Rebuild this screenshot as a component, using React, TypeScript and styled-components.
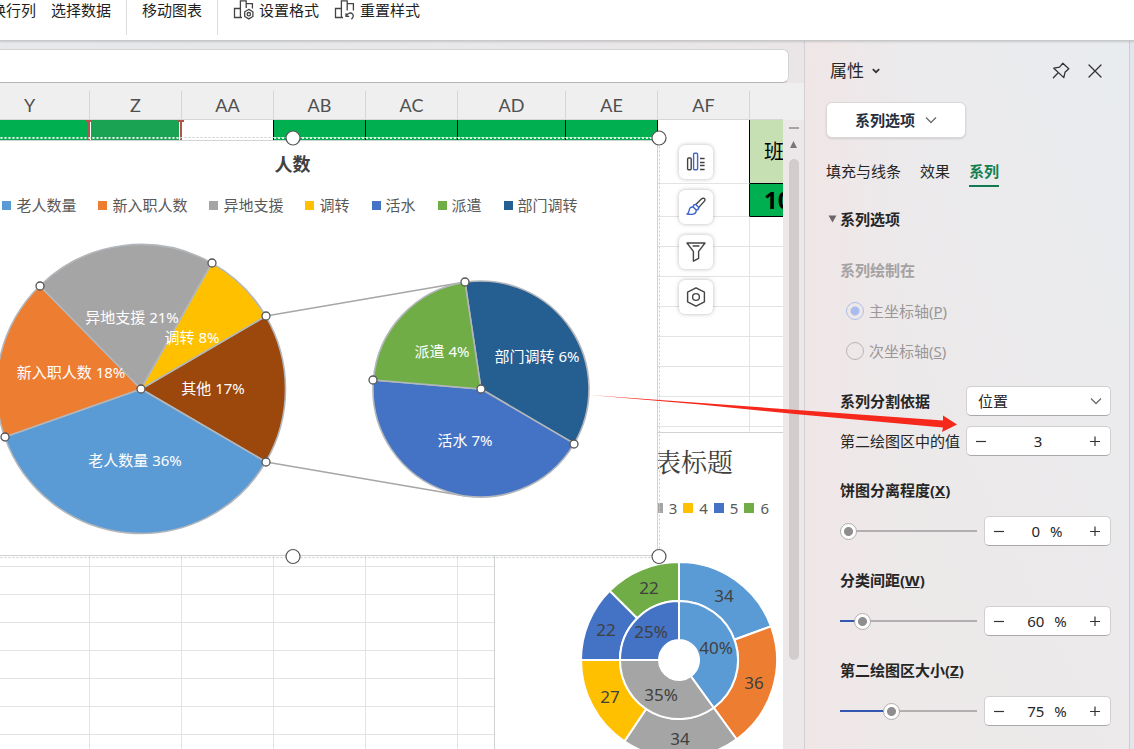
import React, { useId, useState } from "react";
import styled, { createGlobalStyle, css } from "styled-components";

const sans = `"Noto Sans", "Noto Sans CJK SC", sans-serif`;

const GlobalStyle = createGlobalStyle`
  *, *::before, *::after { box-sizing: border-box; }
  body { margin: 0; font-family: ${sans}; font-size: 15px; line-height: 24px; color: #262626; }
  button, input, select { font: inherit; color: inherit; margin: 0; padding: 0; }
  button { border: 0; background: none; }
  svg { display: block; }
`;

/* ---------- shell ---------- */

const Shell = styled.div`
  position: relative;
  display: flex;
  flex-direction: column;
  height: 100vh;
  overflow: hidden;
  background: #e9e9eb;
`;

const Ribbon = styled.header`
  display: flex;
  align-items: flex-start;
  flex: none;
  height: 41px;
  background: #fff;
  border-bottom: 1px solid #c6c8ca;
  box-shadow: 0 1px 2px rgba(0, 0, 0, 0.14);
  z-index: 1;
`;

const RibbonGroup = styled.div<{ $clipped?: boolean }>`
  display: flex;
  gap: 15px;
  height: 35px;
  padding: 0 15px;
  border-right: 1px solid #dcdcdc;
  ${(p) => p.$clipped && css`margin-left: -24px;`}
  &:last-child { border-right: 0; }
`;

const RibbonButton = styled.button`
  display: flex;
  align-items: flex-start;
  gap: 5px;
  height: 20px;
  line-height: 20px;
  white-space: nowrap;
  color: #1f1f1f;
`;

const Body = styled.div`
  display: flex;
  flex: 1;
  min-height: 0;
`;

const Workbook = styled.main`
  display: flex;
  flex-direction: column;
  flex: 1;
  min-width: 0;
  background: linear-gradient(90deg, #e6e8eb, #e8e7e9 60%, #eae6e7);
`;

const FormulaInput = styled.input`
  flex: none;
  height: 34px;
  margin: 8px 15px 0 0;
  padding: 0 8px;
  border: 1px solid #d4d4d4;
  border-left: 0;
  border-bottom-color: #b4b4b4;
  border-radius: 0 6px 6px 0;
  background: #fff;
  outline: 0;
`;

const SheetArea = styled.div`
  display: flex;
  flex: 1;
  min-height: 0;
  background: #efefef;
`;

const Canvas = styled.div`
  position: relative;
  flex: 1;
  min-width: 0;
  overflow: hidden;
  padding-top: 8px;
`;

/* ---------- grid ---------- */

const Grid = styled.table`
  width: 100%;
  min-width: 842px;
  table-layout: fixed;
  border-collapse: separate;
  border-spacing: 0;
`;

const HeadCell = styled.th`
  height: 29px;
  padding: 0;
  border-right: 1px solid #d6d6d6;
  border-bottom: 1px solid #d6d6d6;
  font: 400 18px/28px Lato, sans-serif;
  color: #505050;
  &:first-child { padding-right: 30px; }
`;

const Row = styled.tr<{ $h: number }>`
  height: ${(p) => p.$h}px;
`;

const Cell = styled.td<{ $fill?: string; $right?: string; $bottom?: string; $bold?: boolean }>`
  padding: 0 0 0 14px;
  white-space: nowrap;
  overflow: hidden;
  background: ${(p) => p.$fill ?? "#fff"};
  border-right: 1px solid ${(p) => p.$right ?? "#e2e4e4"};
  border-bottom: 1px solid ${(p) => p.$bottom ?? "#e2e4e4"};
  font-size: ${(p) => (p.$bold ? 24 : 20)}px;
  font-weight: ${(p) => (p.$bold ? 700 : 400)};
  color: #000;
`;

const Marker = styled.svg`
  position: absolute;
  left: 86px;
  top: 37px;
`;

/* ---------- charts on the sheet ---------- */

const ChartFrame = styled.section<{ $x: number; $y: number; $w: number }>`
  position: absolute;
  left: ${(p) => p.$x}px;
  top: ${(p) => p.$y}px;
  width: ${(p) => p.$w}px;
  background: #fff;
  border: 1px solid #cfd3d3;
`;

const PieTitle = styled.h2`
  margin: 0;
  padding-top: 10px;
  font-size: 18px;
  line-height: 26px;
  font-weight: 700;
  text-align: center;
  color: #404040;
`;

const PieLegend = styled.ul`
  display: flex;
  justify-content: center;
  gap: 22px;
  margin: 17px 0 0;
  padding: 0 5px 0 0;
  list-style: none;
`;

const RingTitle = styled.h2`
  margin: 0;
  padding: 10px 131px 0 0;
  font: 400 26px/36px "Noto Serif CJK SC", "Noto Sans CJK SC", serif;
  text-align: right;
  color: #404040;
`;

const RingLegend = styled.ul`
  display: flex;
  justify-content: flex-end;
  gap: 6px;
  margin: 18px 0 1px;
  padding: 0 95px 0 0;
  list-style: none;
`;

const LegendItem = styled.li<{ $color: string; $size: number }>`
  display: flex;
  align-items: center;
  gap: ${(p) => p.$size - 4}px;
  line-height: 22px;
  white-space: nowrap;
  color: #595959;
  &::before {
    content: "";
    width: ${(p) => p.$size}px;
    height: ${(p) => p.$size}px;
    background: ${(p) => p.$color};
  }
`;

const Selection = styled.svg`
  position: absolute;
  left: -82px;
  top: 47px;
`;

const PieLabel = styled.text`
  font-family: ${sans};
  font-size: 15px;
  fill: #fff;
  text-anchor: middle;
`;

const RingLabel = styled.text`
  font-family: ${sans};
  font-size: 17px;
  fill: #404040;
  text-anchor: middle;
`;

const ChartTools = styled.div`
  position: absolute;
  left: 679px;
  top: 62px;
  display: flex;
  flex-direction: column;
  gap: 11px;
`;

const ToolButton = styled.button`
  display: flex;
  align-items: center;
  justify-content: center;
  width: 34px;
  height: 34px;
  border-radius: 6px;
  background: #fff;
  box-shadow: 0 0 4px rgba(0, 0, 0, 0.28);
`;

const ScrollRail = styled.div`
  display: flex;
  flex-direction: column;
  align-items: center;
  flex: none;
  width: 21px;
  margin-top: 37px;
  background: #ece8e9;
`;

const SplitGrip = styled.span`
  width: 10px;
  height: 2px;
  margin: 7px 0 12px;
  background: #a6a3a4;
`;

const ScrollThumb = styled.span`
  width: 10px;
  height: 501px;
  margin-top: 11px;
  border-radius: 5px;
  background: #d2cccd;
`;

/* ---------- properties panel ---------- */

const Panel = styled.aside`
  flex: none;
  width: 330px;
  overflow: hidden;
  border-left: 1px solid #d3cfd2;
  border-right: 4px solid #e3e6ed;
  box-shadow: inset -1px 0 0 #ccccd4;
  background:
    linear-gradient(90deg, rgba(242, 228, 229, 0.6), rgba(242, 228, 229, 0) 30%),
    linear-gradient(245deg, #e8ebef 0%, #ebebed 25%, #ece9ea 55%, #ede9e9 100%);
`;

const PanelHeader = styled.div`
  display: flex;
  align-items: center;
  height: 60px;
  margin-bottom: 1px;
  padding: 0 18px 0 25px;
`;

const PanelTitle = styled.button`
  display: flex;
  align-items: center;
  gap: 8px;
  margin-right: auto;
  font-size: 17px;
`;

const IconButton = styled.button`
  display: flex;
  align-items: center;
  justify-content: center;
  width: 34px;
  height: 34px;
`;

const TargetButton = styled.button`
  display: flex;
  align-items: center;
  justify-content: center;
  gap: 10px;
  width: 140px;
  height: 36px;
  margin-left: 21px;
  border: 1px solid #dcd7d9;
  border-radius: 6px;
  background: #fff;
  box-shadow: 0 1px 2px rgba(0, 0, 0, 0.12);
  font-weight: 700;
  color: #262f3d;
`;

const Tabs = styled.nav`
  display: flex;
  gap: 19px;
  margin: 21px 0 0 21px;
`;

const Tab = styled.button<{ $active?: boolean }>`
  padding-bottom: 2px;
  border-bottom: 2px solid ${(p) => (p.$active ? "#127a50" : "transparent")};
  font-weight: ${(p) => (p.$active ? 700 : 400)};
  color: ${(p) => (p.$active ? "#12804f" : "#262626")};
`;

const SectionToggle = styled.button`
  display: flex;
  align-items: center;
  gap: 3px;
  margin: 20px 0 0 23px;
  font-weight: 700;
`;

const Fields = styled.form`
  padding: 27px 19px 0 35px;
`;

const RadioGroup = styled.fieldset`
  display: flex;
  flex-direction: column;
  gap: 16px;
  margin: 0 0 23px;
  padding: 0;
  border: 0;
  color: #9a9798;
`;

const Legend = styled.legend`
  margin-bottom: 17px;
  padding: 0;
  font-weight: 700;
  color: #a5a2a3;
`;

const RadioLabel = styled.label`
  display: flex;
  align-items: center;
  gap: 5px;
  padding-left: 6px;
`;

const Radio = styled.input`
  appearance: none;
  width: 18px;
  height: 18px;
  border: 1px solid #b9b6b7;
  border-radius: 50%;
  &:checked {
    border-color: #b0c0ea;
    background: radial-gradient(circle, #a8bcf0 4px, transparent 5px);
  }
`;

const FieldRow = styled.div`
  display: flex;
  align-items: center;
  gap: 6px;
  height: 30px;
  margin-bottom: 10px;
`;

const RowLabel = styled.label<{ $strong?: boolean }>`
  flex: none;
  width: 120px;
  font-weight: ${(p) => (p.$strong ? 700 : 400)};
  white-space: nowrap;
`;

const controlBox = css`
  height: 30px;
  border: 1px solid #d2cfd0;
  border-bottom-color: #a9a7a8;
  border-radius: 5px;
  background: #fff;
`;

const SelectWrap = styled.div`
  position: relative;
  flex: 1;
  svg { position: absolute; right: 9px; top: 9px; pointer-events: none; }
`;

const Select = styled.select`
  ${controlBox}
  display: block;
  appearance: none;
  width: 100%;
  padding: 0 11px;
`;

const StepperBox = styled.div<{ $width?: number }>`
  ${controlBox}
  display: flex;
  align-items: center;
  flex: ${(p) => (p.$width ? "none" : "1")};
  width: ${(p) => (p.$width ? `${p.$width}px` : "auto")};
  padding-right: 1px;
`;

const StepButton = styled.button`
  display: flex;
  align-items: center;
  justify-content: center;
  width: 28px;
  height: 28px;
`;

const StepValue = styled.div`
  display: flex;
  justify-content: center;
  gap: 10px;
  flex: 1;
`;

const NumberInput = styled.input<{ $chars: number }>`
  width: ${(p) => p.$chars}ch;
  height: 24px;
  border: 0;
  outline: 0;
  background: none;
  text-align: center;
`;

const SliderField = styled.div`
  padding: 12px 0 10px;
`;

const SliderLabel = styled.label`
  display: block;
  margin-bottom: 14px;
  font-weight: 700;
`;

const SliderRow = styled.div`
  display: flex;
  align-items: center;
  gap: 7px;
`;

const Range = styled.input`
  appearance: none;
  flex: 1;
  min-width: 0;
  height: 18px;
  background: linear-gradient(#3457b2, #3457b2) left center / var(--filled) 2px no-repeat,
    linear-gradient(#b3afb0, #b3afb0) center / 100% 2px no-repeat;
  outline: 0;
  &::-webkit-slider-thumb {
    appearance: none;
    width: 17px;
    height: 17px;
    border: 1px solid #b2aeaf;
    border-radius: 50%;
    background: radial-gradient(circle, #8e8e8e 4px, #fff 5px);
  }
`;

const Arrow = styled.svg`
  position: absolute;
  right: 174px;
  top: 390px;
  z-index: 2;
  pointer-events: none;
`;

/* ---------- icons ---------- */

const ChevronDown = ({ color = "#6b6b6b" }: { color?: string }) => (
  <svg width="12" height="12" viewBox="0 0 12 12" fill="none" stroke={color} strokeWidth="1.3">
    <path d="M1 3.5 6 8.5 11 3.5" />
  </svg>
);

const FormatIcon = () => (
  <svg width="21" height="20" viewBox="0 0 21 20" fill="none" stroke="#444" strokeWidth="1.3">
    <path d="M9 17.5H1.5V8.5H7.4M7.4 17.5V.8H13.2V8M13.2 3.6H19.4V8.5" />
    <path d="M15.8 9.4 19.9 11.8V16.5L15.8 18.9 11.7 16.5V11.8Z" />
    <circle cx="15.8" cy="14.2" r="1.7" />
  </svg>
);

const ResetIcon = () => (
  <svg width="21" height="20" viewBox="0 0 21 20" fill="none" stroke="#444" strokeWidth="1.3">
    <path d="M9 17.5H1.5V8.5H7.4M7.4 17.5V.8H13.2V10.5M13.2 3.6H19.4V10.5" />
    <path d="M12 13.2V16.4H15.2M12.2 16.2C13.6 12.6 17 12.2 18.6 14.2 19.8 15.8 19.2 17.6 17.4 19.2" />
  </svg>
);

const PinIcon = () => (
  <svg width="18" height="18" viewBox="0 0 18 18" fill="none" stroke="#333" strokeWidth="1.3" strokeLinejoin="round" strokeLinecap="round">
    <path d="M1.8 6.2 7.6 5.1 10.8 1.2 16.8 6.8 13 10.3 11.8 15.6ZM6.2 10.8 1.4 15.8" />
  </svg>
);

const CloseIcon = () => (
  <svg width="14" height="14" viewBox="0 0 14 14" stroke="#333" strokeWidth="1.3" strokeLinecap="round">
    <path d="M1 1 13 13M13 1 1 13" />
  </svg>
);

const ElementsIcon = () => (
  <svg width="20" height="20" viewBox="0 0 20 20" fill="none" strokeWidth="1.4">
    <rect x="1.6" y="6" width="3.6" height="11.8" rx="1" stroke="#444" />
    <rect x="7.6" y="1.2" width="4" height="16.6" rx="1" stroke="#4467c4" />
    <path d="M14 6.5H18.6M14 10.5H18.6M14 13.5H18.6M14 17.5H18.6" stroke="#444" />
  </svg>
);

const BrushIcon = () => (
  <svg width="20" height="20" viewBox="0 0 20 20" fill="none" strokeWidth="1.4" strokeLinejoin="round">
    <path d="M9.8 7.4 15.4 2C16.6 1 18.1 1 18.6 1.7 19.2 2.5 18.9 3.6 18 4.6L12.8 10.4" stroke="#444" />
    <path d="M9.8 7.4 12.8 10.4C12.6 12.2 11.8 13 10.2 13L7.2 10C7.2 8.4 8.4 7.4 9.8 7.4ZM7.2 10C4.6 9.6 3.4 11.2 3.2 13.2 3 15 2.4 16 1 17 4.6 17.6 10.6 18 10.2 13" stroke="#3c62cc" />
  </svg>
);

const FilterIcon = () => (
  <svg width="20" height="20" viewBox="0 0 20 20" fill="none" stroke="#444" strokeWidth="1.4" strokeLinejoin="round">
    <path d="M1 1H19L12.6 9.4V16.4L7.4 19.2V9.4ZM6.6 4H13.4" />
  </svg>
);

const HexIcon = () => (
  <svg width="20" height="20" viewBox="0 0 20 20" fill="none" stroke="#444" strokeWidth="1.4" strokeLinejoin="round">
    <path d="M10 .8 18.4 5.2V14.8L10 19.2 1.600 14.8V5.2Z" />
    <circle cx="10" cy="10" r="3.4" />
  </svg>
);

/* ---------- chart geometry ---------- */

const point = (cx: number, cy: number, r: number, deg: number) => {
  const a = (deg * Math.PI) / 180;
  return `${(cx + r * Math.sin(a)).toFixed(2)} ${(cy - r * Math.cos(a)).toFixed(2)}`;
};

const sector = (cx: number, cy: number, r: number, hole: number, from: number, to: number) => {
  const large = to - from > 180 ? 1 : 0;
  const outer = `M${point(cx, cy, r, from)}A${r} ${r} 0 ${large} 1 ${point(cx, cy, r, to)}`;
  return hole === 0
    ? `${outer}L${cx} ${cy}Z`
    : `${outer}L${point(cx, cy, hole, to)}A${hole} ${hole} 0 ${large} 0 ${point(cx, cy, hole, from)}Z`;
};

type Slice = { from: number; to: number; color: string; text: string; x: number; y: number };

const mainPie: Slice[] = [
  { from: 59.7, to: 120.3, color: "#9c470c", text: "其他 17%", x: 213, y: 394 },
  { from: 120.3, to: 250.6, color: "#5b9bd5", text: "老人数量 36%", x: 135, y: 466 },
  { from: 250.6, to: 315.6, color: "#ed7d31", text: "新入职人数 18%", x: 71, y: 378 },
  { from: 315.6, to: 389.4, color: "#a5a5a5", text: "异地支援 21%", x: 132, y: 323 },
  { from: 29.4, to: 59.7, color: "#ffc000", text: "调转 8%", x: 192, y: 343 },
];

const subPie: Slice[] = [
  { from: -8.5, to: 120.4, color: "#255e91", text: "部门调转 6%", x: 537, y: 362 },
  { from: 120.4, to: 274.8, color: "#4472c4", text: "活水 7%", x: 465, y: 446 },
  { from: 274.8, to: 351.5, color: "#70ad47", text: "派遣 4%", x: 442, y: 357 },
];

const ringOuter: Slice[] = [
  { from: 0, to: 69.9, color: "#5b9bd5", text: "34", x: 724, y: 602 },
  { from: 69.9, to: 144, color: "#ed7d31", text: "36", x: 754, y: 689 },
  { from: 144, to: 213.9, color: "#a5a5a5", text: "34", x: 680, y: 745 },
  { from: 213.9, to: 270, color: "#ffc000", text: "27", x: 610, y: 703 },
  { from: 270, to: 315, color: "#4472c4", text: "22", x: 606, y: 636 },
  { from: 315, to: 360, color: "#70ad47", text: "22", x: 649, y: 594 },
];

const ringInner: Slice[] = [
  { from: 0, to: 144, color: "#5b9bd5", text: "40%", x: 716, y: 654 },
  { from: 144, to: 270, color: "#a5a5a5", text: "35%", x: 661, y: 701 },
  { from: 270, to: 360, color: "#4472c4", text: "25%", x: 651, y: 638 },
];

const pieHandles = [
  [141, 389], [266, 316], [266, 462], [5, 437], [40, 286], [212, 263],
  [481, 389], [465, 282], [574, 444], [373, 380],
];

const pieLegend: [string, string][] = [
  ["老人数量", "#5b9bd5"],
  ["新入职人数", "#ed7d31"],
  ["异地支援", "#a5a5a5"],
  ["调转", "#ffc000"],
  ["活水", "#4472c4"],
  ["派遣", "#70ad47"],
  ["部门调转", "#255e91"],
];

const ringLegend: [string, string][] = [
  ["3", "#a5a5a5"],
  ["4", "#ffc000"],
  ["5", "#4472c4"],
  ["6", "#70ad47"],
];

const PieOfPieChart = () => (
  <ChartFrame $x={-73} $y={57} $w={731}>
    <PieTitle>人数</PieTitle>
    <PieLegend>
      {pieLegend.map(([name, color]) => (
        <LegendItem key={name} $color={color} $size={9}>{name}</LegendItem>
      ))}
    </PieLegend>
    <svg width="729" height="339" viewBox="-72 216 729 339">
      <path d="M266 316 465 282M266 462 465 496" stroke="#a6a6a6" strokeWidth="1.3" fill="none" />
      <g stroke="#b3b7bb" strokeWidth="1.6">
        {mainPie.map((s) => <path key={s.text} d={sector(141, 389, 144.5, 0, s.from, s.to)} fill={s.color} />)}
        {subPie.map((s) => <path key={s.text} d={sector(481, 389, 108, 0, s.from, s.to)} fill={s.color} />)}
      </g>
      {[...mainPie, ...subPie].map((s) => <PieLabel key={s.text} x={s.x} y={s.y}>{s.text}</PieLabel>)}
      <g fill="#fff" stroke="#555" strokeWidth="1.3">
        {pieHandles.map(([x, y]) => <circle key={`${x}-${y}`} cx={x} cy={y} r="4" />)}
      </g>
    </svg>
  </ChartFrame>
);

const RingChart = () => (
  <ChartFrame $x={494} $y={349} $w={371}>
    <RingTitle>表标题</RingTitle>
    <RingLegend>
      {ringLegend.map(([name, color]) => (
        <LegendItem key={name} $color={color} $size={10}>{name}</LegendItem>
      ))}
    </RingLegend>
    <svg width="369" height="248" viewBox="495 520 369 248">
      <g stroke="#fff" strokeWidth="2">
        {ringOuter.map((s) => <path key={s.from} d={sector(679, 660, 98, 59, s.from, s.to)} fill={s.color} />)}
        {ringInner.map((s) => <path key={s.from} d={sector(679, 660, 59, 20, s.from, s.to)} fill={s.color} />)}
      </g>
      {[...ringOuter, ...ringInner].map((s) => <RingLabel key={`${s.x}-${s.y}`} x={s.x} y={s.y}>{s.text}</RingLabel>)}
    </svg>
  </ChartFrame>
);

/* ---------- sheet ---------- */

const columns: [string, number][] = [
  ["Y", 90], ["Z", 92], ["AA", 92], ["AB", 92], ["AC", 92], ["AD", 108], ["AE", 92], ["AF", 92], ["", 92],
];

const green = "#00b050";
const firstRowFill: Record<string, string> = {
  Y: green, Z: "#1aa352", AB: green, AC: green, AD: green, AE: green, "": "#c6e0b4",
};
const blackRight = ["AA", "AB", "AC", "AD", "AE", "AF", ""];
const plainRows = [30, 30, 30, 30, 30, 30, 30, ...Array(14).fill(28)];

const Sheet = () => (
  <Canvas>
    <Grid>
      <colgroup>
        {columns.map(([name, w]) => <col key={name} width={name === "" ? undefined : w} />)}
      </colgroup>
      <thead>
        <tr>{columns.map(([name]) => <HeadCell key={name} scope="col">{name}</HeadCell>)}</tr>
      </thead>
      <tbody>
        <Row $h={64}>
          {columns.map(([name]) => (
            <Cell
              key={name}
              $fill={firstRowFill[name]}
              $right={blackRight.includes(name) ? "#000" : undefined}
              $bottom={name === "" ? "#000" : undefined}
            >
              {name === "" ? "班" : null}
            </Cell>
          ))}
        </Row>
        <Row $h={33}>
          {columns.map(([name]) => (
            <Cell
              key={name}
              $bold
              $fill={name === "" ? green : undefined}
              $right={name === "AF" || name === "" ? "#000" : undefined}
              $bottom={name === "" ? "#000" : undefined}
            >
              {name === "" ? "10" : null}
            </Cell>
          ))}
        </Row>
        {plainRows.map((h, i) => (
          <Row key={i} $h={h}>{columns.map(([name]) => <Cell key={name} />)}</Row>
        ))}
      </tbody>
    </Grid>
    <Marker width="98" height="20" viewBox="0 0 98 20">
      <path d="M4.500 2V20M93.500 2V20" stroke="#fff" strokeWidth="1" />
      <path d="M0 1H6M92 1H98" stroke="#b0544c" strokeWidth="2" />
      <path d="M3 1V20M95 1V20" stroke="#b0544c" strokeWidth="2" />
    </Marker>
    <RingChart />
    <PieOfPieChart />
    <Selection width="750" height="436" viewBox="-82 130 750 436" fill="none">
      <rect x="-75.5" y="137.5" width="735" height="420" stroke="#c8cccc" strokeDasharray="2 2" />
      <path d="M-75.500 138H181M274 138H657" stroke="#d5f3e0" strokeWidth="2" strokeDasharray="2 2" />
      <g fill="#fff" stroke="#555" strokeWidth="1.2">
        <circle cx="293" cy="138" r="7" />
        <circle cx="659" cy="138" r="7" />
        <circle cx="293" cy="556.5" r="7" />
        <circle cx="659" cy="556.5" r="7" />
      </g>
    </Selection>
    <ChartTools>
      <ToolButton aria-label="图表元素"><ElementsIcon /></ToolButton>
      <ToolButton aria-label="图表样式"><BrushIcon /></ToolButton>
      <ToolButton aria-label="图表筛选器"><FilterIcon /></ToolButton>
      <ToolButton aria-label="设置图表区域格式"><HexIcon /></ToolButton>
    </ChartTools>
  </Canvas>
);

/* ---------- panel parts ---------- */

type StepperProps = {
  id?: string;
  label?: string;
  value: number;
  unit?: string;
  width?: number;
  onChange: (v: number) => void;
};

const Stepper = ({ id, label, value, unit, width, onChange }: StepperProps) => (
  <StepperBox $width={width}>
    <StepButton type="button" aria-label="减少" onClick={() => onChange(value - 1)}>
      <svg width="10" height="10" viewBox="0 0 10 10" stroke="#333" strokeWidth="1.2"><path d="M0 5.5H10" /></svg>
    </StepButton>
    <StepValue>
      <NumberInput
        id={id}
        aria-label={label}
        $chars={String(value).length}
        value={value}
        onChange={(e) => onChange(Number(e.target.value) || 0)}
      />
      {unit && <span>{unit}</span>}
    </StepValue>
    <StepButton type="button" aria-label="增加" onClick={() => onChange(value + 1)}>
      <svg width="10" height="10" viewBox="0 0 10 10" stroke="#333" strokeWidth="1.2"><path d="M0 5.5H10M5 .5V10.5" /></svg>
    </StepButton>
  </StepperBox>
);

type SliderProps = { name: string; hotkey: string; min?: number; max: number; initial: number };

const Slider = ({ name, hotkey, min = 0, max, initial }: SliderProps) => {
  const id = useId();
  const [value, setValue] = useState(initial);
  const filled = `${Math.round(((value - min) / (max - min)) * 100)}%`;
  return (
    <SliderField>
      <SliderLabel htmlFor={id}>{name}(<u>{hotkey}</u>)</SliderLabel>
      <SliderRow>
        <Range
          id={id}
          type="range"
          min={min}
          max={max}
          value={value}
          onChange={(e) => setValue(Number(e.target.value))}
          style={{ "--filled": filled } as React.CSSProperties}
        />
        <Stepper label={name} value={value} unit="%" width={127} onChange={setValue} />
      </SliderRow>
    </SliderField>
  );
};

const PropertiesPanel = () => {
  const [secondCount, setSecondCount] = useState(3);
  return (
    <Panel>
      <PanelHeader>
        <PanelTitle>
          属性
          <svg width="8" height="6" viewBox="0 0 8 6" fill="none" stroke="#333" strokeWidth="1.8"><path d="M.8 1.2 4 4.2 7.2 1.2" /></svg>
        </PanelTitle>
        <IconButton aria-label="固定"><PinIcon /></IconButton>
        <IconButton aria-label="关闭"><CloseIcon /></IconButton>
      </PanelHeader>
      <TargetButton>系列选项<ChevronDown /></TargetButton>
      <Tabs>
        <Tab>填充与线条</Tab>
        <Tab>效果</Tab>
        <Tab $active>系列</Tab>
      </Tabs>
      <SectionToggle aria-expanded="true">
        <svg width="9" height="8" viewBox="0 0 9 8" fill="#6a6768"><path d="M.5.5H8.5L4.5 7.5Z" /></svg>
        系列选项
      </SectionToggle>
      <Fields>
        <RadioGroup disabled>
          <Legend>系列绘制在</Legend>
          <RadioLabel><Radio type="radio" name="axis" defaultChecked /><span>主坐标轴(<u>P</u>)</span></RadioLabel>
          <RadioLabel><Radio type="radio" name="axis" /><span>次坐标轴(<u>S</u>)</span></RadioLabel>
        </RadioGroup>
        <FieldRow>
          <RowLabel $strong htmlFor="split-by">系列分割依据</RowLabel>
          <SelectWrap>
            <Select id="split-by" defaultValue="position"><option value="position">位置</option></Select>
            <ChevronDown />
          </SelectWrap>
        </FieldRow>
        <FieldRow>
          <RowLabel htmlFor="second-count">第二绘图区中的值</RowLabel>
          <Stepper id="second-count" value={secondCount} onChange={setSecondCount} />
        </FieldRow>
        <Slider name="饼图分离程度" hotkey="X" max={400} initial={0} />
        <Slider name="分类间距" hotkey="W" max={500} initial={60} />
        <Slider name="第二绘图区大小" hotkey="Z" min={5} max={200} initial={75} />
      </Fields>
    </Panel>
  );
};

export default function App() {
  return (
    <Shell>
      <GlobalStyle />
      <Ribbon>
        <RibbonGroup $clipped>
          <RibbonButton>换行列</RibbonButton>
          <RibbonButton>选择数据</RibbonButton>
        </RibbonGroup>
        <RibbonGroup>
          <RibbonButton>移动图表</RibbonButton>
        </RibbonGroup>
        <RibbonGroup>
          <RibbonButton><FormatIcon />设置格式</RibbonButton>
          <RibbonButton><ResetIcon />重置样式</RibbonButton>
        </RibbonGroup>
      </Ribbon>
      <Body>
        <Workbook>
          <FormulaInput aria-label="编辑栏" />
          <SheetArea>
            <Sheet />
            <ScrollRail>
              <SplitGrip />
              <svg width="7" height="7" viewBox="0 0 7 7" fill="#777"><path d="M3.5 0 7 7H0Z" /></svg>
              <ScrollThumb />
            </ScrollRail>
          </SheetArea>
        </Workbook>
        <PropertiesPanel />
      </Body>
      <Arrow width="370" height="48" viewBox="590 390 370 48">
        <path d="M590 395 943 420.500 943 415.5 957 424.5 942 432 943 427.500 800 414.500 700 404.500Z" fill="#f5281b" />
      </Arrow>
    </Shell>
  );
}
